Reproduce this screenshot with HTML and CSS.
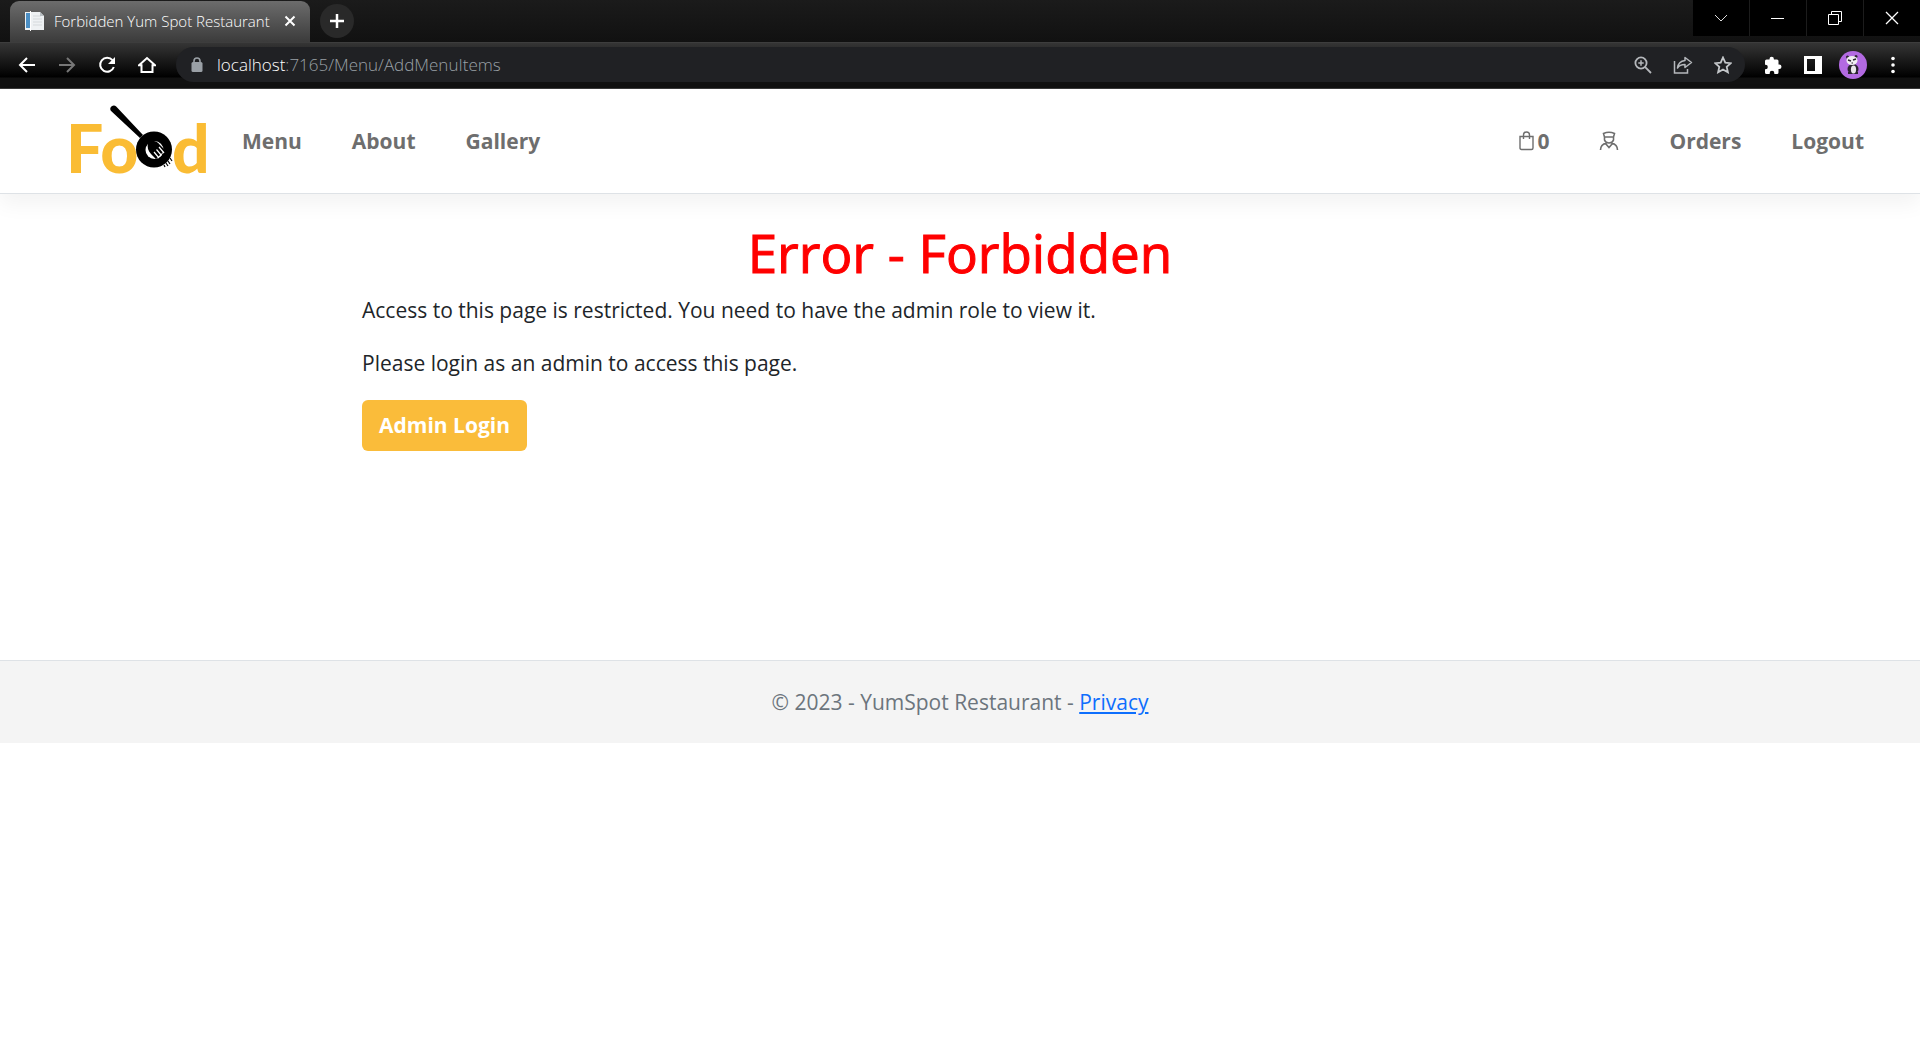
FILE: index.html
```html
<!DOCTYPE html>
<html lang="en">
<head>
<meta charset="utf-8">
<title>Forbidden Yum Spot Restaurant</title>
<link rel="stylesheet" href="styles.css">
</head>
<body>
<div class="browser">
  <div class="tab-strip">
    <div class="tab">
      <svg class="favicon" width="22" height="22" viewBox="0 0 22 22"><path d="M1 2h15l4 4v14H1z" fill="#eef1f3"/><path d="M2 3h4v15H2z" fill="#4c8fc4"/><path d="M6 1h1v20H6z" fill="#fff"/><path d="M9 6h8M9 9h9M9 12h9M9 15h9" stroke="#d5d9dc"/><path d="M16 2v4h4" fill="#b8bec2"/></svg>
      <span class="tab-title">Forbidden Yum Spot Restaurant</span>
      <button class="icon-button tab-close" aria-label="Close tab"><svg width="12" height="12" viewBox="0 0 12 12"><path d="M1.500 1.500l9 9m0-9l-9 9" stroke="#fff" stroke-width="2"/></svg></button>
    </div>
    <button class="new-tab" aria-label="New tab"><svg width="16" height="16" viewBox="0 0 16 16"><path d="M8 1v14M1 8h14" stroke="#fff" stroke-width="2.500"/></svg></button>
    <div class="window-buttons">
      <button aria-label="Search tabs"><svg width="14" height="14" viewBox="0 0 14 14"><path d="M1 4l6 6 6-6" fill="none" stroke="#ddd"/></svg></button>
      <button aria-label="Minimize"><svg width="14" height="14" viewBox="0 0 14 14"><path d="M0 7.500h13" stroke="#fff"/></svg></button>
      <button aria-label="Restore"><svg width="14" height="14" viewBox="0 0 14 14"><path d="M.5 3.500h10v10H.5zM3.500 3V.5h10v10H11" fill="none" stroke="#fff"/></svg></button>
      <button aria-label="Close"><svg width="14" height="14" viewBox="0 0 14 14"><path d="M1 1l12 12m0-12L1 13" stroke="#fff" stroke-width="1.300"/></svg></button>
    </div>
  </div>
  <div class="toolbar">
    <div class="nav-buttons">
      <button class="icon-button" aria-label="Back"><svg width="18" height="18" viewBox="0 0 18 18"><path d="M17 9H2m7-7L2 9l7 7" fill="none" stroke="#fff" stroke-width="2"/></svg></button>
      <button class="icon-button" aria-label="Forward"><svg width="18" height="18" viewBox="0 0 18 18"><path d="M1 9h15M9 2l7 7-7 7" fill="none" stroke="#777" stroke-width="2"/></svg></button>
      <button class="icon-button" aria-label="Reload"><svg width="18" height="18" viewBox="0 0 18 18"><path d="M14.500 4.200A7 7 0 1 0 15.800 11" fill="none" stroke="#fff" stroke-width="2"/><path d="M17 1v7h-7z" fill="#fff"/></svg></button>
      <button class="icon-button" aria-label="Home"><svg width="18" height="18" viewBox="0 0 18 18"><path d="M1 9.200L9 2l8 7.200h-2.500V16h-11V9.200z" fill="none" stroke="#fff" stroke-width="2"/></svg></button>
    </div>
    <div class="address">
      <svg width="12" height="16" viewBox="0 0 12 16"><rect y="5" x=".5" width="11" height="10" rx="1.500" fill="#9aa0a6"/><path d="M3 6V4a3 3 0 0 1 6 0v2" fill="none" stroke="#9aa0a6" stroke-width="1.600"/></svg>
      <span class="url"><span class="host">localhost</span>:7165/Menu/AddMenuItems</span>
      <div class="address-actions">
        <button class="icon-button" aria-label="Zoom"><svg width="18" height="18" viewBox="0 0 18 18"><g fill="none" stroke="#b5b8bc" stroke-width="1.800"><circle cx="7" cy="7" r="5.600"/><path d="M11.200 11.200L17 17"/><path d="M7 4.300v5.400M4.300 7h5.400" stroke-width="1.500"/></g></svg></button>
        <button class="icon-button" aria-label="Share"><svg width="20" height="18" viewBox="0 0 20 18"><g fill="none" stroke="#b5b8bc" stroke-width="1.500"><path d="M1.500 5v12h13v-4"/><path d="M12 1.500l6.500 5-6.500 5V8.500c-4 0-6 1-7.500 3.500.5-4 3-7 7.500-7.500z" stroke-linejoin="round"/></g></svg></button>
        <button class="icon-button" aria-label="Bookmark"><svg width="18" height="18" viewBox="0 0 18 18"><path d="M9 1.500l2.300 5.100 5.500.6-4.100 3.700 1.200 5.400L9 13.500l-4.900 2.800 1.200-5.400L1.200 7.200l5.500-.6z" fill="none" stroke="#c4c7ca" stroke-width="1.800"/></svg></button>
      </div>
    </div>
    <div class="extension-buttons">
      <button class="icon-button" aria-label="Extensions"><svg width="18" height="18" viewBox="0 0 18 18"><path d="M1 5q0-1.500 1.500-1.500H5.500V3a2.200 2.200 0 0 1 4.400 0v.5H13q1.500 0 1.500 1.500v3.500h.8a2.200 2.200 0 0 1 0 4.400h-.8v3.600q0 1.500-1.500 1.500h-2.700V17a2.300 2.300 0 0 0-4.600 0v1H2.500Q1 18 1 16.500V13.300h.5a2.300 2.300 0 0 0 0-4.600H1z" fill="#fff"/></svg></button>
      <button class="icon-button" aria-label="Side panel"><svg width="18" height="18" viewBox="0 0 18 18"><path d="M1.500 1.500h15v15h-15z" fill="none" stroke="#fff" stroke-width="3"/><path d="M11 1h6v16h-6z" fill="#fff"/></svg></button>
      <button class="icon-button" aria-label="Profile"><svg width="28" height="28" viewBox="0 0 28 28"><circle cx="14" cy="14" r="14" fill="#b36ae2"/><ellipse cx="14" cy="18" rx="5.500" ry="5" fill="#29232d"/><path d="M9 21h4v2H9zM15 21h4v2h-4z" fill="#29232d"/><ellipse cx="14.500" cy="18.500" rx="2.600" ry="4" fill="#e9e6ea"/><circle cx="8.500" cy="6" r="1.500" fill="#29232d"/><circle cx="17" cy="5.500" r="1.500" fill="#29232d"/><ellipse cx="13" cy="9.500" rx="5.500" ry="4.500" fill="#f1eff2"/><path d="M9 9l3 1M14 9l3-1" stroke="#29232d" stroke-width="1.400"/><path d="M12.500 12h1.500" stroke="#29232d"/></svg></button>
      <button class="icon-button" aria-label="More"><svg width="18" height="18" viewBox="0 0 18 18"><g fill="#fff"><circle cx="9" cy="2.500" r="1.800"/><circle cx="9" cy="9" r="1.800"/><circle cx="9" cy="15.500" r="1.800"/></g></svg></button>
    </div>
  </div>
</div>

<header class="site-header">
  <a class="logo" href="#" aria-label="Food">
    <svg width="156" height="104" viewBox="0 0 156 104">
      <g class="logo-text"><text x="6" y="84">Fo</text><text x="112" y="84">d</text></g>
      <path d="M50.800 21.800A3.500 3.500 0 0 1 56.200 17.500L83 46l-3 3z" fill="#000"/>
      <circle cx="94" cy="60.500" r="18" fill="#000"/>
      <circle cx="94.500" cy="61" r="9" fill="#fff"/>
      <path d="M84 49l4 3c5-1 10 0 12 4l5 5-9 9-5-5c-3-3-4-7-3-11z" fill="#000"/>
      <path d="M99 58l5 6M96.500 60.500l5 6M94 63l5 6" stroke="#fff" stroke-width="1.200"/>
      <path d="M104 76l1 2m1-4l2 3m0-5l2 3m0-6l2 3" stroke="#000" stroke-width="1.200"/>
    </svg>
  </a>
  <nav class="main-nav">
    <a href="#">Menu</a>
    <a href="#">About</a>
    <a href="#">Gallery</a>
  </nav>
  <nav class="user-nav">
    <a href="#" aria-label="Cart, 0 items"><svg width="16" height="20" viewBox="0 0 16 20"><path d="M1 5.500h13V17q0 1.500-1.500 1.500h-10Q1 18.500 1 17zM4.500 8V4a3 3 0 0 1 6 0v4" fill="none" stroke="#6e6e6e" stroke-width="1.400"/></svg>0</a>
    <a href="#" aria-label="Account"><svg width="20" height="20" viewBox="0 0 20 20"><path d="M4.500 2.500Q10 0 15.500 2.500L14.500 6v3q-1 3-4.500 3T5.500 9V6zM5 6h10M1.500 19c0-4 2-6 6-7M18.500 19c0-4-2-6-6-7M6.500 12.500l3.500 4 3.500-4" fill="none" stroke="#6e6e6e" stroke-width="1.600"/></svg></a>
    <a href="#">Orders</a>
    <a href="#">Logout</a>
  </nav>
</header>

<main class="content">
  <h1>Error - Forbidden</h1>
  <p>Access to this page is restricted. You need to have the admin role to view it.</p>
  <p>Please login as an admin to access this page.</p>
  <button class="login-button">Admin Login</button>
</main>

<footer class="site-footer">© 2023 - YumSpot Restaurant - <a href="#">Privacy</a></footer>
</body>
</html>
```
FILE: styles.css
```css
* { box-sizing: border-box; }

body {
  margin: 0;
  background: #fff;
  color: #212529;
  font-family: "Open Sans", "Noto Sans", sans-serif;
  font-size: 21px;
  line-height: 33px;
}

button {
  border: 0;
  padding: 0;
  background: none;
  font: inherit;
}

svg { display: block; flex: none; }

/* Browser window */
.browser { background: #111; border-bottom: 1px solid #3a3a3a; }

.tab-strip {
  display: flex;
  align-items: center;
  height: 42px;
  padding-left: 10px;
  background: linear-gradient(#1b1b1b, #111);
}

.tab {
  display: flex;
  align-items: center;
  align-self: flex-end;
  gap: 8px;
  width: 300px;
  height: 41px;
  padding: 0 10px 2px 14px;
  border-radius: 9px 9px 0 0;
  background: linear-gradient(#6c6c6c, #3b3b3b);
}

.tab-title {
  flex: 1;
  color: #fff;
  font-size: 15px;
  font-weight: 300;
  line-height: 20px;
  white-space: nowrap;
}

.icon-button {
  display: flex;
  align-items: center;
  justify-content: center;
  width: 20px;
  height: 28px;
}

.new-tab {
  display: flex;
  align-items: center;
  justify-content: center;
  width: 34px;
  height: 34px;
  margin-left: 10px;
  border-radius: 50%;
  background: #292929;
}

.window-buttons {
  display: flex;
  align-self: flex-start;
  gap: 1px;
  margin-left: auto;
  background: #1c1c1c;
}

.window-buttons button {
  display: flex;
  align-items: center;
  justify-content: center;
  width: 56px;
  height: 36px;
  background: #000;
}

.toolbar {
  display: flex;
  align-items: center;
  height: 46px;
  padding: 0 17px 2px;
  border-top: 1px solid #3d3d3d;
  background: linear-gradient(#353535 0, #000 34px, #111 35px, #111 100%);
}

.nav-buttons { display: flex; gap: 20px; width: 159px; }

.address {
  display: flex;
  flex: 1;
  align-items: center;
  gap: 14px;
  height: 35px;
  padding: 0 12px 0 15px;
  border-radius: 18px;
  background: #202124;
}

.url {
  color: #9aa0a6;
  font-size: 17px;
  font-weight: 300;
  line-height: 24px;
}

.host { color: #fff; }

.address-actions { display: flex; gap: 20px; margin-left: auto; }

.extension-buttons {
  display: flex;
  gap: 20px;
  margin-left: 18px;
}

/* Site */
.site-header {
  display: flex;
  align-items: center;
  height: 105px;
  padding: 0 31px 0 60px;
  border-bottom: 1px solid #dee2e6;
  box-shadow: 0 10px 20px rgba(0, 0, 0, 0.05);
}

.logo-text {
  fill: #fabc34;
  font-family: Lato, sans-serif;
  font-size: 66px;
  font-weight: 900;
}

.main-nav,
.user-nav { display: flex; }

.main-nav { margin-left: 1px; }
.user-nav { margin-left: auto; }

.site-header nav a {
  display: flex;
  align-items: center;
  gap: 2px;
  padding: 0 25px;
  color: #6e6e6e;
  font-size: 21px;
  font-weight: 700;
  text-decoration: none;
}

.content {
  max-width: 1196px;
  min-height: 466px;
  margin: 0 auto;
  padding-top: 26px;
}

h1 {
  margin: 0 0 8px;
  color: #f00;
  font-size: 53px;
  font-weight: 500;
  line-height: 66px;
  text-align: center;
  -webkit-text-stroke: 1px #f00;
}

p { margin: 0 0 20px; }

.login-button {
  height: 51px;
  padding: 0 17px;
  border-radius: 6px;
  background: #fabc3a;
  color: #fff;
  font-weight: 700;
}

.site-footer {
  padding: 25px 20px 24px;
  border-top: 1px solid #dee2e6;
  background: #f4f4f4;
  color: #6c757d;
  text-align: center;
}

.site-footer a { color: #0d6efd; }
```
